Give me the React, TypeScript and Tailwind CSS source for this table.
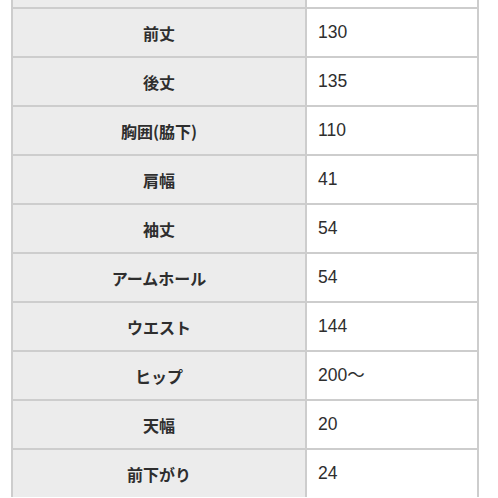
const rows = [
  { label: '前丈', value: '130' },
  { label: '後丈', value: '135' },
  { label: '胸囲(脇下)', value: '110' },
  { label: '肩幅', value: '41' },
  { label: '袖丈', value: '54' },
  { label: 'アームホール', value: '54' },
  { label: 'ウエスト', value: '144' },
  { label: 'ヒップ', value: '200〜' },
  { label: '天幅', value: '20' },
  { label: '前下がり', value: '24' },
]

export default function App() {
  return (
    <div className="w-[498px] h-[498px] overflow-hidden bg-white pl-[11px]">
      <div className="w-[468px] border-x-2 border-[#cdcdcd] bg-[#cdcdcd] flex flex-col gap-[2px]">
        {/* partial row cut off at the top */}
        <div className="flex h-[7px] gap-[2px]">
          <div className="w-[292px] bg-[#ececec]" />
          <div className="flex-1 bg-white" />
        </div>
        {rows.map(({ label, value }) => (
          <div key={label} className="flex h-[47px] gap-[2px] text-[#2e2e2e]">
            <div className="w-[292px] bg-[#ececec] flex items-center justify-center text-[16px] font-semibold font-['Noto_Sans_CJK_JP',sans-serif]">
              {label}
            </div>
            <div className="flex-1 bg-white flex items-center pl-[11px] text-[17.5px] font-['Liberation_Sans','Noto_Sans_CJK_JP',sans-serif]">
              {value}
            </div>
          </div>
        ))}
      </div>
    </div>
  )
}
